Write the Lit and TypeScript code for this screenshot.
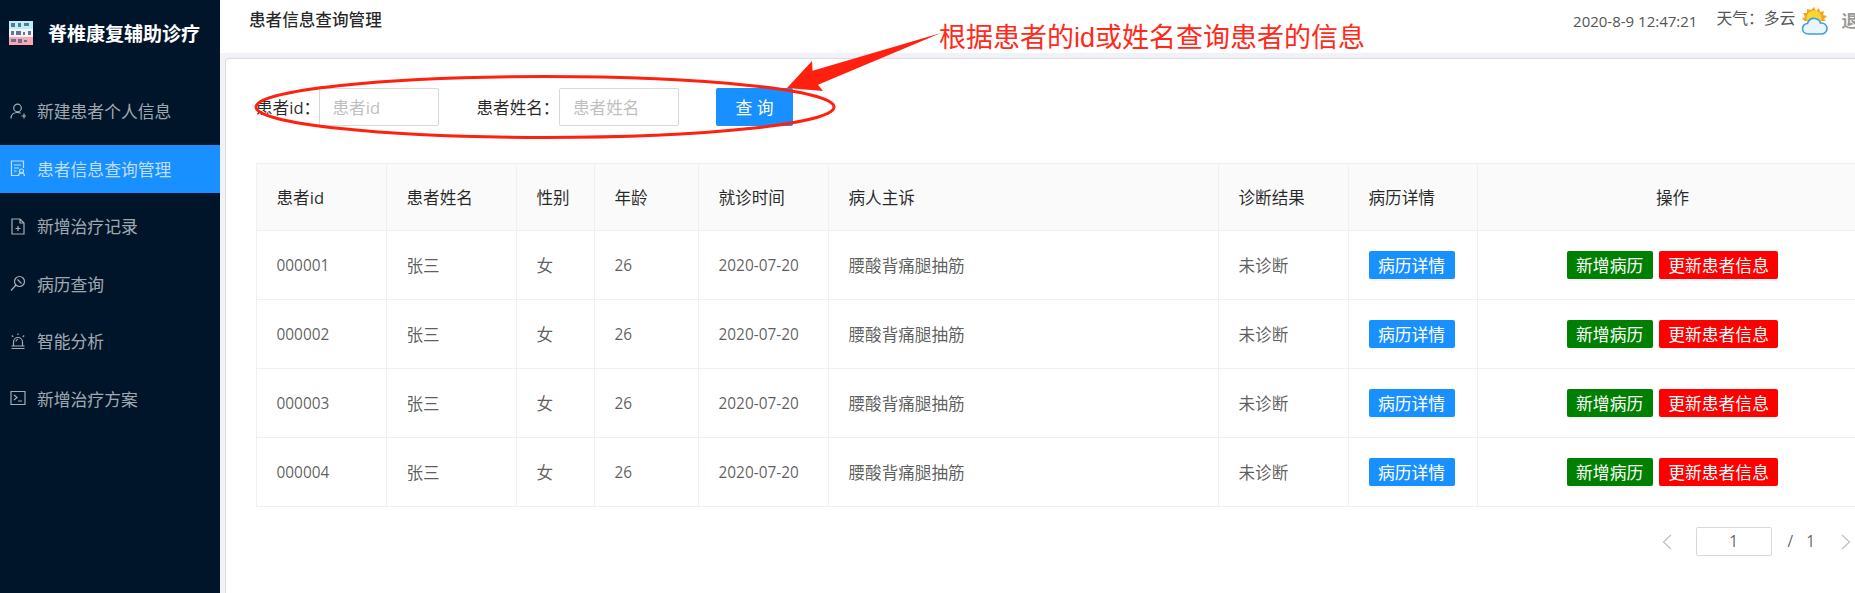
import { LitElement, html, css, svg } from "lit";
import { customElement } from "lit/decorators.js";

const menu = [
  { label: "新建患者个人信息", icon: svg`<circle cx="7.5" cy="5" r="3.8"/><path d="M1 15.5c0-3.8 2.8-6 6.5-6 1.2 0 2.3.3 3.2.8M11.5 13h5M14 10.5v5"/>` },
  { label: "患者信息查询管理", active: true, icon: svg`<path d="M8 15.5H1.5V1h12v7"/><path d="M4 5h7M4 8h5M4 11h2.5" /><circle cx="11.5" cy="11" r="2"/><path d="M8.5 16c0-2 1.3-3 3-3s3 1 3 3"/>` },
  { label: "新增治疗记录", icon: svg`<path d="M2 1h8l4 4v11H2zM10 1v4h4M5.5 10.5h5M8 8v5"/>` },
  { label: "病历查询", icon: svg`<circle cx="9.5" cy="6.5" r="5"/><path d="M6 10 1 15.5M7.5 4.5l4 4"/>` },
  { label: "智能分析", icon: svg`<path d="M3.5 13V9a4.5 4.5 0 0 1 9 0v4M1.5 13h13M1.5 15.5h13M8 .5v1.5M1.8 2.5l1.4 1.4M14.2 2.5l-1.4 1.4M6 8.5a2 2 0 0 1 2-2"/>` },
  { label: "新增治疗方案", icon: svg`<path d="M1 1.5h14v13H1zM4 5l3 2.5L4 10M8 11h4"/>` },
];

const rows = ["000001", "000002", "000003", "000004"];
const widths = [130, 130, 78, 104, 130, 390, 130, 129, 390];

@customElement("app-root")
export class AppRoot extends LitElement {
  static styles = css`
    :host {
      display: block;
      width: 1855px;
      height: 593px;
      overflow: hidden;
      position: relative;
      background: #f0f2f5;
      font-family: "Open Sans", "Noto Sans CJK SC", sans-serif;
      font-size: 16.6px;
      color: rgba(0, 0, 0, 0.65);
    }
    .layout { display: flex; width: 1896px; height: 593px; }
    .side {
      width: 220px;
      flex: none;
      background: #001529;
      color: rgba(255, 255, 255, 0.65);
    }
    .brand {
      display: flex;
      align-items: center;
      height: 66px;
      padding-left: 9px;
      gap: 15px;
      margin-bottom: 21px;
      color: #fff;
      font-weight: 700;
      font-size: 19px;
    }
    .logo { width: 24px; height: 24px; display: block; }
    .menu { display: flex; flex-direction: column; gap: 9.6px; }
    .item {
      display: flex;
      align-items: center;
      height: 48px;
      padding-left: 10px;
      gap: 11px;
      font-size: 16.8px;
    }
    .item.active { background: #1890ff; color: rgba(255, 255, 255, 0.72); }
    .item svg {
      width: 16px;
      height: 17px;
      flex: none;
      fill: none;
      stroke: currentColor;
      stroke-width: 1.2;
    }
    .main { flex: 1; min-width: 0; display: flex; flex-direction: column; }
    .top {
      height: 53px;
      flex: none;
      background: #fff;
      display: flex;
      align-items: flex-start;
      justify-content: space-between;
      padding: 0 21px 0 29px;
      box-sizing: border-box;
    }
    .title {
      margin-top: 8px;
      line-height: 24px;
      font-size: 16.6px;
      font-weight: 500;
      color: rgba(0, 0, 0, 0.85);
    }
    .status { display: flex; align-items: flex-start; }
    .clock { margin-top: 10px; line-height: 22px; font-size: 15px; margin-right: 19px; color: #555; }
    .weather { margin-top: 7px; line-height: 22px; font-size: 15.8px; margin-right: 6px; color: #555; }
    .sun { width: 27px; height: 28px; margin-top: 7px; margin-right: 13px; display: block; }
    .logout { margin-top: 9px; line-height: 24px; font-weight: 700; font-size: 16.8px; color: #999; }
    .card {
      flex: 1;
      margin: 5px 0 0 5px;
      background: #fff;
      border: 1px solid #dcdee3;
      border-bottom: 0;
      border-radius: 4px 0 0 0;
      padding: 29px 30px 0;
    }
    .filter { display: flex; align-items: center; height: 38px; margin-bottom: 37px; }
    .label { color: rgba(0, 0, 0, 0.85); white-space: nowrap; }
    .label.id { width: 62.5px; }
    .label.name { width: 82.5px; margin-left: 38px; }
    .input {
      width: 120px;
      height: 38px;
      box-sizing: border-box;
      border: 1px solid #d9d9d9;
      border-radius: 2px;
      padding-left: 13px;
      display: flex;
      align-items: center;
      color: #bfbfbf;
    }
    .query {
      width: 77px;
      height: 38px;
      margin-left: 37px;
      background: #1890ff;
      color: #fff;
      border-radius: 2px;
      display: flex;
      align-items: center;
      justify-content: center;
      font-size: 16.8px;
    }
    table {
      table-layout: fixed;
      width: 1610px;
      border-collapse: collapse;
      border: 1px solid #f0f0f0;
    }
    th, td {
      border: 1px solid #f0f0f0;
      padding: 0 0 0 19.5px;
      text-align: left;
      font-weight: 400;
    }
    th { height: 66px; background: #fafafa; color: rgba(0, 0, 0, 0.85); }
    td { height: 68px; }
    th.center, td.center { text-align: center; padding: 0; }
    .num { font-size: 15.4px; }
    .acts { display: flex; justify-content: center; gap: 6px; padding-right: 0; }
    .btn {
      display: inline-flex;
      align-items: center;
      justify-content: center;
      height: 28px;
      border-radius: 2px;
      color: #fff;
      font-size: 16.8px;
      padding: 0 9.5px;
      box-shadow: 0 2px 0 rgba(0, 0, 0, 0.03);
      white-space: nowrap;
    }
    .blue { background: #1890ff; }
    .green { background: #008000; }
    .red { background: #ff0000; }
    .pager {
      display: flex;
      align-items: center;
      justify-content: flex-end;
      width: 1610px;
      height: 29px;
      margin-top: 20px;
      padding-right: 15px;
      box-sizing: border-box;
      font-size: 15.4px;
      color: rgba(0, 0, 0, 0.65);
    }
    .chev { width: 10px; height: 16px; fill: none; stroke: #bfbfbf; stroke-width: 1.2; display: block; }
    .page {
      width: 76px;
      height: 29px;
      box-sizing: border-box;
      border: 1px solid #d9d9d9;
      border-radius: 2px;
      display: flex;
      align-items: center;
      justify-content: center;
      margin: 0 16px 0 24px;
    }
    .sep { margin-right: 13px; }
    .total { margin-right: 26px; }
    .overlay {
      position: absolute;
      inset: 0;
      width: 1855px;
      height: 593px;
      pointer-events: none;
    }
    .note {
      position: absolute;
      left: 939px;
      top: 18px;
      font-family: "Liberation Sans", "Noto Sans CJK SC", sans-serif;
      font-size: 27px;
      line-height: 40px;
      color: #ff2a1a;
      white-space: nowrap;
    }
  `;

  render() {
    return html`
      <div class="layout">
        <aside class="side">
          <div class="brand">
            <svg class="logo" viewBox="0 0 24 24" aria-hidden="true">
              <rect width="24" height="8" fill="#b6f3f6"/>
              <rect y="8" width="24" height="8" fill="#f4f6fa"/>
              <rect y="16" width="24" height="8" fill="#fba7b0"/>
              <g fill="#6b7196">
                <rect x="2" y="2" width="4" height="4"/><rect x="9" y="2" width="3" height="4"/><rect x="15" y="2" width="5" height="3"/>
                <rect x="2" y="10" width="3" height="4"/><rect x="7" y="10" width="5" height="4"/><rect x="14" y="11" width="2" height="3"/><rect x="19" y="10" width="3" height="4"/>
                <rect x="2" y="18" width="5" height="3"/><rect x="9" y="18" width="4" height="4"/><rect x="15" y="19" width="3" height="2"/>
              </g>
            </svg>
            <span>脊椎康复辅助诊疗</span>
          </div>
          <nav class="menu">
            ${menu.map(
              (m) => html`<div class="item ${m.active ? "active" : ""}">
                <svg viewBox="0 0 16 17" aria-hidden="true">${m.icon}</svg><span>${m.label}</span>
              </div>`
            )}
          </nav>
        </aside>
        <div class="main">
          <header class="top">
            <div class="title">患者信息查询管理</div>
            <div class="status">
              <span class="clock">2020-8-9 12:47:21</span>
              <span class="weather">天气：多云</span>
              <svg class="sun" viewBox="0 0 27 28" aria-hidden="true">
                <g fill="#f2a71b">
                  <path d="M13 0l2 4 3-3 1 4 4-1-1 4 4 1-3 3 2 2H4l-3-2 3-2-2-4 4 0 0-4 4 1z"/>
                </g>
                <circle cx="13" cy="11" r="7.5" fill="#fcd535"/>
                <path d="M8 27c-4 0-6.500-2.500-6.500-5.500S4 16.500 6.500 16.500C7.500 13 10.500 11 14 11.500c3 .4 5 2.500 5.500 4.500 3.500-.5 6.500 2 6.500 5.500S23 27 20 27z" fill="#eaf6fe" stroke="#3f9ddd" stroke-width="1.6"/>
              </svg>
              <span class="logout">退出</span>
            </div>
          </header>
          <section class="card">
            <div class="filter">
              <span class="label id">患者id：</span>
              <div class="input">患者id</div>
              <span class="label name">患者姓名：</span>
              <div class="input">患者姓名</div>
              <div class="query">查 询</div>
            </div>
            <table>
              <colgroup>${widths.map((w) => html`<col style="width:${w}px" />`)}</colgroup>
              <thead>
                <tr>
                  <th>患者id</th><th>患者姓名</th><th>性别</th><th>年龄</th><th>就诊时间</th>
                  <th>病人主诉</th><th>诊断结果</th><th>病历详情</th><th class="center">操作</th>
                </tr>
              </thead>
              <tbody>
                ${rows.map(
                  (id) => html`<tr>
                    <td class="num">${id}</td><td>张三</td><td>女</td><td class="num">26</td>
                    <td class="num">2020-07-20</td><td>腰酸背痛腿抽筋</td><td>未诊断</td>
                    <td><span class="btn blue">病历详情</span></td>
                    <td class="center"><div class="acts"><span class="btn green">新增病历</span><span class="btn red">更新患者信息</span></div></td>
                  </tr>`
                )}
              </tbody>
            </table>
            <div class="pager">
              <svg class="chev" viewBox="0 0 10 16" aria-hidden="true"><path d="M9 1 1.500 8 9 15"/></svg>
              <div class="page">1</div>
              <span class="sep">/</span>
              <span class="total">1</span>
              <svg class="chev" viewBox="0 0 10 16" aria-hidden="true"><path d="M1 1 8.500 8 1 15"/></svg>
            </div>
          </section>
        </div>
      </div>
      <svg class="overlay" viewBox="0 0 1855 593" aria-hidden="true">
        <ellipse cx="545" cy="107" rx="289" ry="30.500" fill="none" stroke="#ff2010" stroke-width="3"/>
        <polygon points="941,33 812.600,70.700 812,61 787,88 823,91 818,84.700" fill="#ff2010"/>
      </svg>
      <div class="note">根据患者的id或姓名查询患者的信息</div>
    `;
  }
}
